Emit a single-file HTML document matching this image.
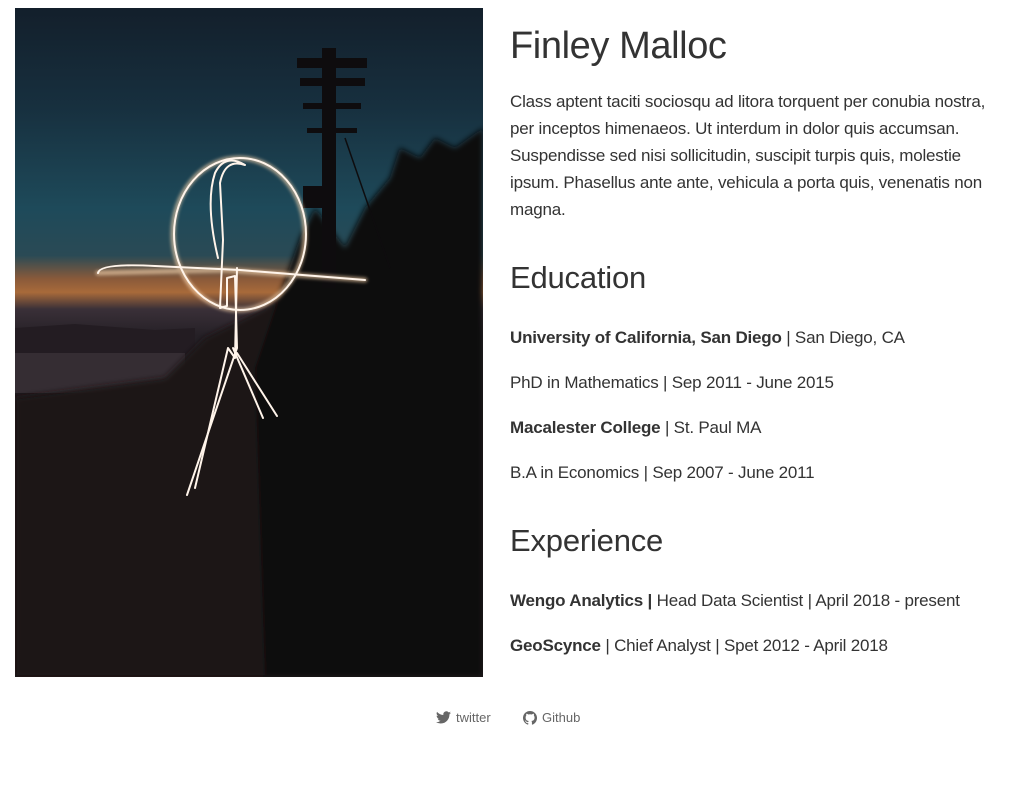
<!DOCTYPE html>
<html><head><meta charset="utf-8"><style>
body{margin:0;background:#fff;width:1033px;height:786px;position:relative;font-family:"Liberation Sans",sans-serif;color:#333;overflow:hidden}
.a{position:absolute;left:510px;white-space:nowrap}
h1,h2{font-weight:normal;margin:0}
.t{font-size:38px;line-height:40px;top:26px;letter-spacing:-0.4px}
.h{font-size:31px;line-height:34px;letter-spacing:-0.2px}
.p{font-size:17px;line-height:27px;top:88px;letter-spacing:-0.2px}
.l{font-size:17px;line-height:22px;letter-spacing:-0.2px}
b{font-weight:bold}
.f{position:absolute;top:709px;font-size:13px;color:#666;display:flex;align-items:center;gap:5px}
</style></head><body>
<svg style="position:absolute;left:15px;top:8px" width="468" height="669" viewBox="0 0 468 669">
<defs>
<linearGradient id="s" x1="0" y1="0" x2="0" y2="1">
<stop offset="0" stop-color="#131f2b"/><stop offset="0.15" stop-color="#17303f"/>
<stop offset="0.3" stop-color="#1e4a5a"/><stop offset="0.37" stop-color="#2a4a55"/>
<stop offset="0.405" stop-color="#8a5a3a"/><stop offset="0.425" stop-color="#a86a3a"/>
<stop offset="0.45" stop-color="#3a3038"/><stop offset="0.49" stop-color="#252026"/>
<stop offset="0.6" stop-color="#1d171a"/><stop offset="1" stop-color="#1b1416"/>
</linearGradient>
<filter id="g"><feGaussianBlur stdDeviation="1.5"/></filter>
<filter id="b"><feGaussianBlur stdDeviation="3"/></filter>
</defs>
<rect width="468" height="669" fill="url(#s)"/>
<path d="M0 320 L60 316 L140 322 L180 320 L180 345 L0 350Z" fill="#231c22"/>
<rect y="345" width="170" height="40" fill="#352d33"/>
<g filter="url(#b)">
<path d="M0 390 L150 370 L190 330 L250 300 L300 260 L468 250 L468 669 L0 669Z" fill="#1a1416"/>
<path d="M260 300 L285 230 L300 200 L330 240 L350 200 L375 170 L385 140 L405 150 L420 130 L440 140 L468 120 L468 669 L250 669 L240 360Z" fill="#110d0f"/>
</g>
<g fill="#0e0c0e">
<rect x="307" y="40" width="14" height="240"/>
<rect x="282" y="50" width="70" height="10"/>
<rect x="285" y="70" width="65" height="8"/>
<rect x="288" y="95" width="58" height="6"/>
<rect x="292" y="120" width="50" height="5"/>
<rect x="288" y="178" width="20" height="22"/>
</g>
<path d="M330 130 L375 260" stroke="#0e0c0e" stroke-width="1.5"/>
<g fill="none" stroke="#fff4ea" stroke-linecap="round" stroke-linejoin="round">
<g filter="url(#g)" stroke="#ffd9b0" stroke-width="5" opacity="0.6">
<ellipse cx="224" cy="226" rx="66" ry="76"/>
<path d="M83 265 L210 262 L350 272"/>
</g>
<g stroke-width="2">
<ellipse cx="225" cy="226" rx="66" ry="76"/>
<path d="M83 265 Q85 255 140 258 L225 262 L350 272"/>
<path d="M203 250 Q190 195 200 165 Q210 145 230 157 Q210 150 205 175 L208 232 L205 300 L212 298 L212 270 L220 268 L222 340 L172 487"/>
<path d="M222 260 L220 350 L213 340 L180 480 M222 345 L262 408 M218 340 L248 410"/>
</g>
</g>
</svg>
<h1 class="a t">Finley Malloc</h1>
<div class="a p">Class aptent taciti sociosqu ad litora torquent per conubia nostra,<br>per inceptos himenaeos. Ut interdum in dolor quis accumsan.<br>Suspendisse sed nisi sollicitudin, suscipit turpis quis, molestie<br>ipsum. Phasellus ante ante, vehicula a porta quis, venenatis non<br>magna.</div>
<h2 class="a h" style="top:261px">Education</h2>
<div class="a l" style="top:327px"><b>University of California, San Diego</b> | San Diego, CA</div>
<div class="a l" style="top:372px">PhD in Mathematics | Sep 2011 - June 2015</div>
<div class="a l" style="top:417px"><b>Macalester College</b> | St. Paul MA</div>
<div class="a l" style="top:462px">B.A in Economics | Sep 2007 - June 2011</div>
<h2 class="a h" style="top:524px">Experience</h2>
<div class="a l" style="top:590px"><b>Wengo Analytics |</b> Head Data Scientist | April 2018 - present</div>
<div class="a l" style="top:635px"><b>GeoScynce</b> | Chief Analyst | Spet 2012 - April 2018</div>
<div class="f" style="left:436px;top:710px"><svg width="15" height="13" viewBox="0 0 24 20"><path fill="#666" d="M24 2.4a10 10 0 0 1-2.8.8A4.9 4.9 0 0 0 23.3.5a9.8 9.8 0 0 1-3.1 1.2A4.9 4.9 0 0 0 11.8 6 14 14 0 0 1 1.7.9a4.9 4.9 0 0 0 1.5 6.6A4.9 4.9 0 0 1 1 6.9a4.9 4.9 0 0 0 3.9 4.8 4.9 4.9 0 0 1-2.2.1 4.9 4.9 0 0 0 4.6 3.4A9.9 9.9 0 0 1 0 17.300 14 14 0 0 0 7.5 19.5c9.1 0 14-7.5 14-14v-.6A10 10 0 0 0 24 2.4z"/></svg>twitter</div>
<div class="f" style="left:523px;top:710px"><svg width="14" height="14" viewBox="0 0 16 16"><path fill="#666" d="M8 0a8 8 0 0 0-2.5 15.6c.4 0 .5-.2.5-.4v-1.5c-2.2.5-2.7-1-2.7-1-.4-.9-.9-1.2-.9-1.2-.7-.5.1-.5.1-.5.8.1 1.2.8 1.2.8.7 1.3 1.9.9 2.4.7 0-.5.3-.9.5-1.1-1.8-.2-3.6-.9-3.6-4 0-.9.3-1.6.8-2.1-.1-.2-.4-1 .1-2.1 0 0 .7-.2 2.2.8a7.6 7.6 0 0 1 4 0c1.5-1 2.2-.8 2.2-.8.4 1.1.2 1.9.1 2.1.5.6.8 1.3.8 2.1 0 3.1-1.9 3.8-3.600 4 .3.3.6.8.6 1.5v2.2c0 .2.1.5.6.4A8 8 0 0 0 8 0z"/></svg>Github</div>
</body></html>
